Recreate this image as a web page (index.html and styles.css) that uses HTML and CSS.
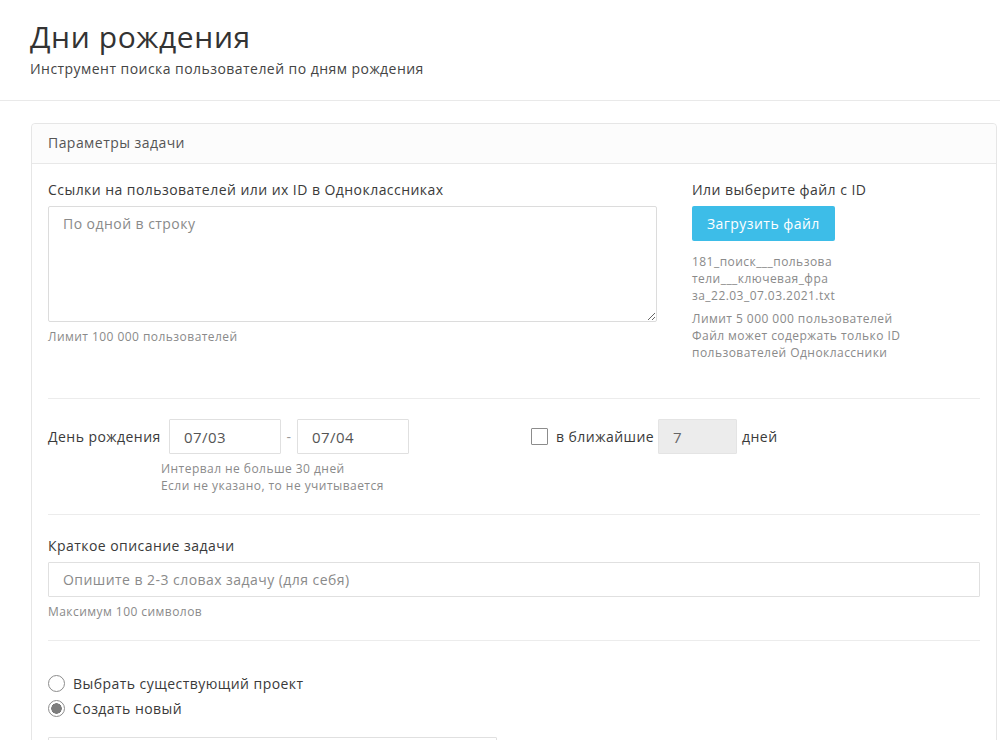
FILE: index.html
```html
<!DOCTYPE html>
<html lang="ru">
<head>
<meta charset="utf-8">
<title>Дни рождения</title>
<link rel="stylesheet" href="styles.css">
</head>
<body>
<header class="page-head">
  <h1 class="title">Дни рождения</h1>
  <p class="subtitle">Инструмент поиска пользователей по дням рождения</p>
</header>
<main class="content">
  <section class="card">
    <div class="card-head">Параметры задачи</div>
    <div class="card-body">
      <div class="block block-links">
        <div class="links-main">
          <label class="label">Ссылки на пользователей или их ID в Одноклассниках</label>
          <textarea class="textarea" placeholder="По одной в строку"></textarea>
          <div class="hint">Лимит 100 000 пользователей</div>
        </div>
        <div class="links-file">
          <div class="label">Или выберите файл с ID</div>
          <button class="btn" type="button">Загрузить файл</button>
          <div class="filename">181_поиск___пользова<br>тели___ключевая_фра<br>за_22.03_07.03.2021.txt</div>
          <div class="hint">Лимит 5 000 000 пользователей<br>Файл может содержать только ID<br>пользователей Одноклассники</div>
        </div>
      </div>

      <div class="block block-dates">
        <div class="dates-left">
          <div class="dates-row">
            <span class="row-label">День рождения</span>
            <input class="input input-date" type="text" value="07/03">
            <span class="dash">-</span>
            <input class="input input-date" type="text" value="07/04">
          </div>
          <div class="hint dates-hint">Интервал не больше 30 дней<br>Если не указано, то не учитывается</div>
        </div>
        <div class="dates-right">
          <span class="checkbox"></span>
          <span class="check-label">в ближайшие</span>
          <input class="input input-days" type="text" value="7" disabled>
          <span class="days-label">дней</span>
        </div>
      </div>

      <div class="block block-desc">
        <label class="label">Краткое описание задачи</label>
        <input class="input input-wide" type="text" placeholder="Опишите в 2-3 словах задачу (для себя)">
        <div class="hint">Максимум 100 символов</div>
      </div>

      <div class="block block-project">
        <div class="radio-row"><span class="radio"></span><span>Выбрать существующий проект</span></div>
        <div class="radio-row"><span class="radio radio-on"></span><span>Создать новый</span></div>
        <input class="input input-project" type="text">
      </div>
    </div>
  </section>
</main>
</body>
</html>
```

FILE: styles.css
```css
* { box-sizing: border-box; }

html, body {
  margin: 0;
  padding: 0;
  background: #fff;
}

body {
  font-family: "Open Sans", "Noto Sans", "DejaVu Sans", sans-serif;
  font-size: 14px;
  letter-spacing: 0.45px;
  color: #3a3a3a;
  overflow: hidden;
}

.page-head {
  height: 101px;
  padding: 17px 30px 0;
  border-bottom: 1px solid #e9e9e9;
}

.title {
  margin: 0;
  font-size: 30px;
  font-weight: 400;
  line-height: 40px;
  color: #333;
  letter-spacing: 0.6px;
}

.subtitle {
  margin: 2px 0 0;
  font-size: 14px;
  line-height: 20px;
  color: #444;
}

.content {
  padding: 22px 3px 0 31px;
}

.card {
  border: 1px solid #e6e6e6;
  border-radius: 4px;
  background: #fff;
}

.card-head {
  height: 40px;
  line-height: 38px;
  padding: 0 16px;
  background: #fcfcfc;
  border-bottom: 1px solid #e8e8e8;
  color: #555;
  border-radius: 4px 4px 0 0;
}

.card-body {
  padding: 0 16px;
}

.block {
  border-bottom: 1px solid #ececec;
}

.label {
  display: block;
  line-height: 20px;
  color: #3a3a3a;
}

.hint {
  font-size: 12px;
  line-height: 17px;
  color: #8a8a8a;
}

/* links block */
.block-links {
  display: flex;
  gap: 35px;
  padding: 16px 0 37px;
}

.links-main {
  width: 609px;
}

.textarea {
  display: block;
  width: 609px;
  height: 116px;
  margin-top: 6px;
  padding: 7px 14px;
  border: 1px solid #dcdcdc;
  border-radius: 2px;
  font-family: inherit;
  font-size: 14px;
  letter-spacing: 0.45px;
  line-height: 20px;
  color: #333;
  resize: vertical;
}

.textarea::placeholder,
.input::placeholder {
  color: #8a8a8a;
}

.links-main .hint {
  margin-top: 6px;
}

.links-file {
  flex: 1;
}

.btn {
  display: block;
  margin-top: 6px;
  height: 35px;
  padding: 0 15px;
  border: none;
  border-radius: 2px;
  background: #3dbde8;
  color: #fff;
  font-family: inherit;
  font-size: 14px;
  letter-spacing: 0.45px;
}

.filename {
  margin-top: 12px;
  font-size: 12px;
  line-height: 17px;
  color: #8a8a8a;
}

.links-file .hint {
  margin-top: 6px;
}

/* dates block */
.block-dates {
  display: grid;
  grid-template-columns: 1fr 1fr;
  column-gap: 34px;
  padding: 20px 0 20px;
}

.dates-row {
  display: flex;
  align-items: center;
}

.row-label {
  width: 121px;
  flex: none;
}

.input {
  height: 35px;
  border: 1px solid #e0e0e0;
  border-radius: 1px;
  font-family: inherit;
  font-size: 15px;
  letter-spacing: 0.45px;
  color: #555;
  background: #fff;
  outline: none;
}

.input-date {
  width: 112px;
  padding: 0 14px;
}

.dash {
  width: 16px;
  text-align: center;
  color: #999;
}

.dates-hint {
  margin: 6px 0 0 113px;
}

.dates-right {
  display: flex;
  align-items: center;
  height: 35px;
}

.checkbox {
  width: 17px;
  height: 17px;
  border: 1px solid #8c8c8c;
  border-radius: 1px;
  margin-right: 8px;
}

.check-label {
  margin-right: 4px;
}

.input-days {
  width: 79px;
  padding: 0 14px;
  background: #ececec;
  border-color: #e4e4e4;
  color: #666;
}

.days-label {
  margin-left: 5px;
}

/* description */
.block-desc {
  padding: 21px 0 20px;
}

.input-wide {
  display: block;
  width: 100%;
  margin-top: 6px;
  padding: 0 14px;
  font-size: 14px;
}

.block-desc .hint {
  margin-top: 6px;
}

/* project */
.block-project {
  border-bottom: none;
  padding: 30px 0 0;
}

.radio-row {
  display: flex;
  align-items: center;
  height: 25px;
  font-size: 14px;
  color: #3a3a3a;
}

.radio {
  width: 17px;
  height: 17px;
  border: 1px solid #8c8c8c;
  border-radius: 50%;
  margin-right: 8px;
  flex: none;
  background: #fff;
}

.radio-on {
  background: radial-gradient(circle, #7d7d7d 0 5px, #fff 5.5px);
}

.input-project {
  display: block;
  width: 449px;
  margin-top: 16px;
}
```
